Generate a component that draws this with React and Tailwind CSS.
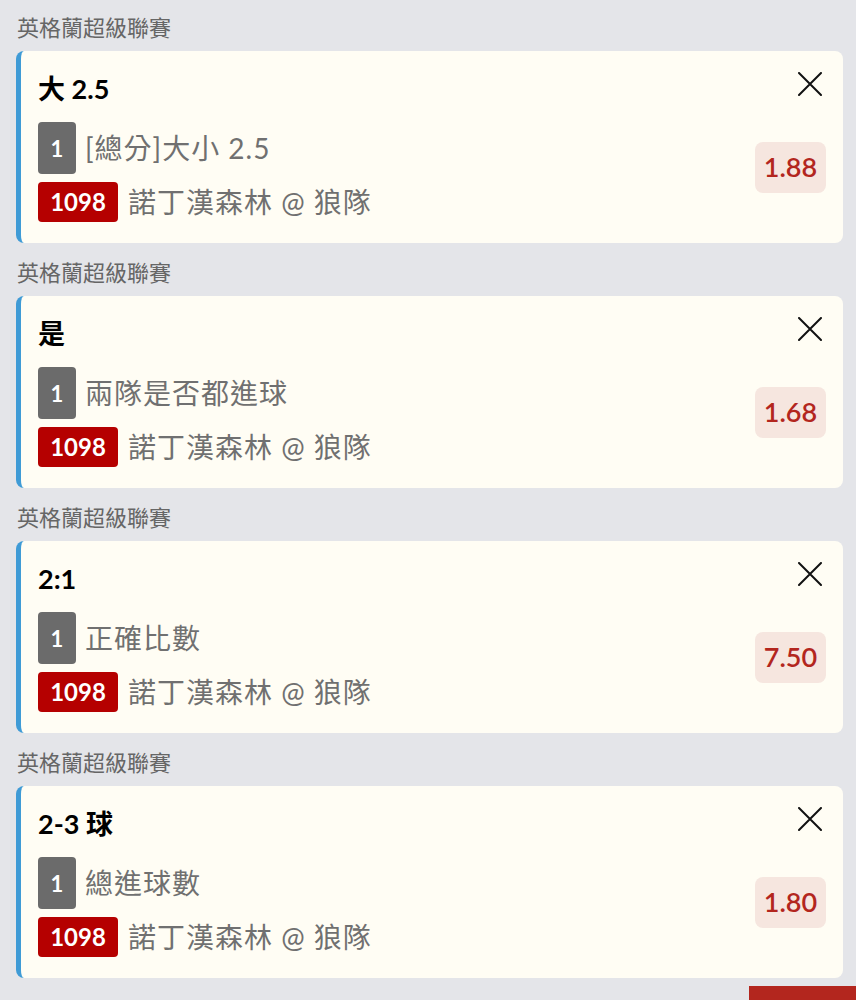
const bets = [
  { pick: "大 2.5", market: "[總分]大小 2.5", odds: "1.88" },
  { pick: "是", market: "兩隊是否都進球", odds: "1.68" },
  { pick: "2:1", market: "正確比數", odds: "7.50" },
  { pick: "2-3 球", market: "總進球數", odds: "1.80" },
];

const font = { fontFamily: 'Lato, "Noto Sans CJK TC", sans-serif' };

function CloseIcon() {
  return (
    <svg width="24" height="24" viewBox="0 0 24 24" fill="none">
      <path d="M1 1L23 23M23 1L1 23" stroke="#111" strokeWidth="2" strokeLinecap="round" />
    </svg>
  );
}

function BetCard({ bet }) {
  return (
    <div className="mb-[2px]">
      <div className="h-[51px] pl-[17px] pt-[17px] text-[22px] leading-[22px] text-[#666]">
        英格蘭超級聯賽
      </div>
      <div className="ml-[16px] mr-[13px] flex h-[192px] rounded-lg border-l-[5px] border-[#3f9bd6] bg-[#fffdf4] pl-[17px] pr-[17px]">
        <div className="flex flex-1 flex-col">
          <div className="pt-[23px] text-[27px] font-bold leading-[30px] text-black">
            {bet.pick}
          </div>
          <div className="mt-[18px] flex items-center gap-[9px]">
            <span className="flex h-[52px] w-[38px] items-center justify-center rounded-[4px] bg-[#6b6b6b] text-[22px] font-bold text-white">
              1
            </span>
            <span className="text-[28px] tracking-[1px] text-[#707070]">{bet.market}</span>
          </div>
          <div className="mt-[7px] flex items-center gap-[10px]">
            <span className="flex h-[40px] w-[80px] items-center justify-center rounded-[4px] bg-[#b50000] text-[24px] font-bold text-white">
              1098
            </span>
            <span className="text-[28px] tracking-[1px] text-[#707070]">諾丁漢森林 @ 狼隊</span>
          </div>
        </div>
        <div className="flex flex-col items-end pt-[21px]">
          <div className="mr-[4px] h-[24px] w-[24px]">
            <CloseIcon />
          </div>
          <div className="mt-[46px] flex h-[51px] w-[71px] items-center justify-center rounded-lg bg-[#f6e6df] text-[27px] font-semibold text-[#b3261e]">
            {bet.odds}
          </div>
        </div>
      </div>
    </div>
  );
}

export default function App() {
  return (
    <div className="min-h-[1000px] bg-[#e4e5e9]" style={font}>
      {bets.map((bet, i) => (
        <BetCard key={i} bet={bet} />
      ))}
      <div className="mt-[8px] flex justify-end">
        <div className="h-[40px] w-[107px] bg-[#b3261e]" />
      </div>
    </div>
  );
}
